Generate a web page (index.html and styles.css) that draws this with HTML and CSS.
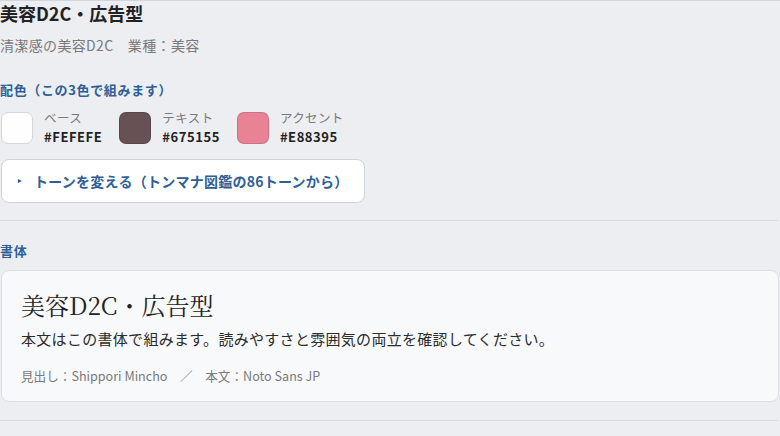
FILE: index.html
```html
<!DOCTYPE html>
<html lang="ja">
<head>
    <meta charset="UTF-8">
    <meta name="viewport" content="width=device-width, initial-scale=1.0">
    <title>美容D2C・広告型</title>
    <link rel="stylesheet" href="styles.css">
</head>
<body>
    <div class="page">
        <section class="section section-palette">
            <h1 class="title">美容D2C・広告型</h1>
            <p class="subtitle">清潔感の美容D2C　業種：美容</p>

            <h2 class="section-label label-palette">配色（この3色で組みます）</h2>
            <div class="swatches">
                <div class="swatch-item">
                    <div class="swatch swatch-base"></div>
                    <div class="swatch-text">
                        <div class="swatch-name">ベース</div>
                        <div class="swatch-code">#FEFEFE</div>
                    </div>
                </div>
                <div class="swatch-item">
                    <div class="swatch swatch-text-color"></div>
                    <div class="swatch-text">
                        <div class="swatch-name">テキスト</div>
                        <div class="swatch-code">#675155</div>
                    </div>
                </div>
                <div class="swatch-item">
                    <div class="swatch swatch-accent"></div>
                    <div class="swatch-text">
                        <div class="swatch-name">アクセント</div>
                        <div class="swatch-code">#E88395</div>
                    </div>
                </div>
            </div>

            <details class="tone-toggle">
                <summary><span class="marker"></span>トーンを変える（トンマナ図鑑の86トーンから）</summary>
            </details>
        </section>

        <section class="section section-font">
            <h2 class="section-label">書体</h2>
            <div class="font-card">
                <div class="font-heading">美容D2C・広告型</div>
                <p class="font-body">本文はこの書体で組みます。読みやすさと雰囲気の両立を確認してください。</p>
                <p class="font-meta">見出し：Shippori Mincho　／　本文：Noto Sans JP</p>
            </div>
        </section>

        <section class="section section-next"></section>
    </div>
</body>
</html>
```

FILE: styles.css
```css
:root {
    --bg: #eceef2;
    --line: #d9dce2;
    --blue: #2f5f96;
    --text-dark: #2b2b2b;
    --text-gray: #7a7a7a;
}

* {
    margin: 0;
    padding: 0;
    box-sizing: border-box;
}

body {
    font-family: "Noto Sans CJK JP", "Noto Sans", sans-serif;
    background: var(--bg);
    color: var(--text-dark);
}

.page {
    border-top: 1px solid #d2d5db;
    padding-right: 1px;
}

.section {
    border-bottom: 1px solid var(--line);
}

.section-palette {
    padding-bottom: 17px;
}

.title {
    font-size: 18px;
    font-weight: 700;
    line-height: 25px;
    color: #222;
}

.subtitle {
    margin-top: 9px;
    font-size: 14px;
    line-height: 21px;
    color: var(--text-gray);
    letter-spacing: 0.35px;
}

.section-label {
    font-size: 13px;
    font-weight: 700;
    line-height: 19px;
    color: var(--blue);
    letter-spacing: 0.65px;
}

.label-palette {
    margin-top: 24px;
}

.swatches {
    display: flex;
    gap: 17px;
    margin-top: 10px;
    margin-left: 1px;
}

.swatch-item {
    display: flex;
    align-items: center;
    gap: 11px;
}

.swatch {
    width: 32px;
    height: 32px;
    border-radius: 7px;
    border: 1px solid rgba(0, 0, 0, 0.12);
}

.swatch-base {
    background: #fefefe;
    border-color: #d3d6dc;
}

.swatch-text-color {
    background: #675155;
}

.swatch-accent {
    background: #e88395;
}

.swatch-name {
    font-size: 12.5px;
    line-height: 18px;
    color: var(--text-gray);
    letter-spacing: 0.4px;
}

.swatch-code {
    font-size: 13px;
    font-weight: 700;
    line-height: 19px;
    color: #222;
    letter-spacing: 0.55px;
}

.tone-toggle {
    display: inline-block;
    margin-top: 13px;
    margin-left: 1px;
    background: #fff;
    border: 1px solid #cfd3da;
    border-radius: 8px;
}

.tone-toggle summary {
    list-style: none;
    display: flex;
    align-items: center;
    padding: 11px 16px 11px 16px;
    font-size: 14px;
    font-weight: 700;
    line-height: 20px;
    color: var(--blue);
    letter-spacing: 0.25px;
    cursor: pointer;
}

.tone-toggle summary::-webkit-details-marker {
    display: none;
}

.marker {
    width: 0;
    height: 0;
    border-left: 4px solid var(--blue);
    border-top: 2.5px solid transparent;
    border-bottom: 2.5px solid transparent;
    margin-right: 12px;
}

.section-font {
    padding-top: 20px;
    padding-bottom: 18px;
}

.font-card {
    margin-top: 10px;
    margin-left: 1px;
    background: #f8f9fb;
    border: 1px solid #dcdfe4;
    border-radius: 8px;
    padding: 17px 19px 16px;
}

.font-heading {
    font-family: "Noto Serif CJK JP", "Liberation Serif", "Noto Sans CJK JP", serif;
    font-size: 24px;
    line-height: 34px;
    color: #222;
}

.font-body {
    margin-top: 5px;
    font-size: 15px;
    line-height: 24px;
    color: #2b2b2b;
    letter-spacing: 0.3px;
}

.font-meta {
    margin-top: 15px;
    font-size: 12.6px;
    line-height: 19px;
    color: var(--text-gray);
}

.section-next {
    height: 16px;
}
```
